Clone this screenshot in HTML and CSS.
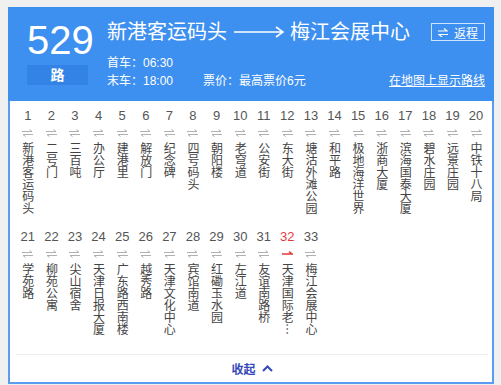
FILE: index.html
```html
<!DOCTYPE html>
<html>
<head>
    <title>529路</title>
    <link rel="stylesheet" href="styles.css">
</head>
<body>
    <div class="panel">
        <div class="head">
            <div class="line-badge">
                <div class="line-no">529</div>
                <div class="line-unit">路</div>
            </div>
            <div class="info">
                <div class="title-row">
                    <h1>新港客运码头<svg class="dir-arrow" width="52" height="14" viewBox="0 0 52 14"><path d="M1 7H50M43 2l7 5-7 5" fill="none" stroke="#fff" stroke-width="1.6"/></svg>梅江会展中心</h1>
                    <button class="return-btn"><svg width="10" height="9" viewBox="0 0 10 9"><path d="M0 3h9L6 0.5M10 6.5H1l3 2.5" fill="none" stroke="#fff" stroke-width="1.2"/></svg>返程</button>
                </div>
                <div class="meta">
                    <div class="times">
                        <div>首车：06:30</div>
                        <div>末车：18:00</div>
                    </div>
                    <div class="price">票价：最高票价6元</div>
                    <a class="map-link" href="#">在地图上显示路线</a>
                </div>
            </div>
        </div>

        <div class="body">
            <ol class="stops">
                <li><span class="no">1</span><i class="flow"></i><span class="name">新港客运码头</span></li>
                <li><span class="no">2</span><i class="flow"></i><span class="name">二号门</span></li>
                <li><span class="no">3</span><i class="flow"></i><span class="name">三百吨</span></li>
                <li><span class="no">4</span><i class="flow"></i><span class="name">办公厅</span></li>
                <li><span class="no">5</span><i class="flow"></i><span class="name">建港里</span></li>
                <li><span class="no">6</span><i class="flow"></i><span class="name">解放门</span></li>
                <li><span class="no">7</span><i class="flow"></i><span class="name">纪念碑</span></li>
                <li><span class="no">8</span><i class="flow"></i><span class="name">四号码头</span></li>
                <li><span class="no">9</span><i class="flow"></i><span class="name">朝阳楼</span></li>
                <li><span class="no">10</span><i class="flow"></i><span class="name">老穹道</span></li>
                <li><span class="no">11</span><i class="flow"></i><span class="name">公安街</span></li>
                <li><span class="no">12</span><i class="flow"></i><span class="name">东大街</span></li>
                <li><span class="no">13</span><i class="flow"></i><span class="name">塘沽外滩公园</span></li>
                <li><span class="no">14</span><i class="flow"></i><span class="name">和平路</span></li>
                <li><span class="no">15</span><i class="flow"></i><span class="name">极地海洋世界</span></li>
                <li><span class="no">16</span><i class="flow"></i><span class="name">浙商大厦</span></li>
                <li><span class="no">17</span><i class="flow"></i><span class="name">滨海国泰大厦</span></li>
                <li><span class="no">18</span><i class="flow"></i><span class="name">碧水庄园</span></li>
                <li><span class="no">19</span><i class="flow"></i><span class="name">远景庄园</span></li>
                <li><span class="no">20</span><i class="flow"></i><span class="name">中铁十八局</span></li>
                <li><span class="no">21</span><i class="flow"></i><span class="name">学苑路</span></li>
                <li><span class="no">22</span><i class="flow"></i><span class="name">柳苑公寓</span></li>
                <li><span class="no">23</span><i class="flow"></i><span class="name">尖山宿舍</span></li>
                <li><span class="no">24</span><i class="flow"></i><span class="name">天津日报大厦</span></li>
                <li><span class="no">25</span><i class="flow"></i><span class="name">广东路西南楼</span></li>
                <li><span class="no">26</span><i class="flow"></i><span class="name">越秀路</span></li>
                <li><span class="no">27</span><i class="flow"></i><span class="name">天津文化中心</span></li>
                <li><span class="no">28</span><i class="flow"></i><span class="name">宾馆南道</span></li>
                <li><span class="no">29</span><i class="flow"></i><span class="name">红磡玉水园</span></li>
                <li><span class="no">30</span><i class="flow"></i><span class="name">左江道</span></li>
                <li><span class="no">31</span><i class="flow"></i><span class="name">友谊南路桥</span></li>
                <li class="current"><span class="no">32</span><i class="flow"></i><span class="name">天津国际老…</span></li>
                <li><span class="no">33</span><i class="flow"></i><span class="name">梅江会展中心</span></li>
            </ol>

            <div class="fold">收起<svg width="11" height="7" viewBox="0 0 11 7"><path d="M1 6l4.5-4.5L10 6" fill="none" stroke="#3548b8" stroke-width="2"/></svg></div>
        </div>
    </div>
</body>
</html>
```

FILE: styles.css
```css
body {
    margin: 0;
    padding: 7px 0 0 8px;
    background: #f0f0f0;
    font-family: "Liberation Sans", "Noto Sans CJK SC", sans-serif;
}
.panel {
    width: 486px;
}
.head {
    display: flex;
    background: #3d8ff0;
    color: #fff;
    padding: 13px 9px 11px 19px;
}
.line-badge {
    width: 61px;
    margin-right: 19px;
}
.line-no {
    font-size: 40px;
    line-height: 40px;
    text-align: center;
}
.line-unit {
    margin-top: 5px;
    height: 20px;
    line-height: 20px;
    background: #3383e6;
    text-align: center;
    font-size: 14px;
    font-weight: bold;
}
.info {
    flex: 1;
}
.title-row {
    display: flex;
    justify-content: space-between;
    align-items: flex-start;
}
h1 {
    margin: 0;
    font-size: 20px;
    line-height: 24px;
    font-weight: normal;
    display: flex;
    align-items: center;
}
.dir-arrow {
    margin: 0 5px 0 6px;
}
.return-btn {
    margin-top: 3px;
    display: flex;
    align-items: center;
    gap: 6px;
    height: 18px;
    padding: 0 6px;
    background: transparent;
    border: 1px solid #cfe2fb;
    color: #fff;
    font-family: inherit;
    font-size: 12px;
    cursor: pointer;
}
.meta {
    display: flex;
    align-items: flex-end;
    margin-top: 10px;
    font-size: 12px;
    line-height: 18px;
}
.times {
    width: 96px;
}
.map-link {
    margin-left: auto;
    color: #fff;
}
.body {
    background: #fff;
    border: 2px solid #5b9cf0;
    border-top: none;
    padding: 7px 4px 0 6px;
}
.stops {
    list-style: none;
    margin: 0;
    padding: 0;
    display: grid;
    grid-template-columns: repeat(20, 23.6px);
    row-gap: 15px;
}
.stops li {
    display: flex;
    flex-direction: column;
    align-items: center;
}
.no {
    font-size: 13px;
    line-height: 16px;
    color: #555;
}
.flow {
    width: 11px;
    height: 8px;
    margin-top: 5px;
    background: url("data:image/svg+xml,%3Csvg xmlns='http://www.w3.org/2000/svg' width='11' height='8'%3E%3Cpath d='M0 2.5h10L7.5 0.5M11 5.5H1l2.5 2' fill='none' stroke='%23b0b0b0' stroke-width='1'/%3E%3C/svg%3E") no-repeat;
}
.name {
    margin-top: 5px;
    writing-mode: vertical-lr;
    font-family: "Noto Sans CJK SC", sans-serif;
    font-size: 12px;
    line-height: 14px;
    color: #444;
}
.current .no {
    color: #e4393c;
}
.current .flow {
    background: url("data:image/svg+xml,%3Csvg xmlns='http://www.w3.org/2000/svg' width='11' height='8'%3E%3Cpath d='M0 4h10L7 1.5' fill='none' stroke='%23e4393c' stroke-width='1.5'/%3E%3C/svg%3E") no-repeat;
}
.fold {
    margin-top: 19px;
    border-top: 1px solid #eeeeee;
    height: 27px;
    display: flex;
    align-items: center;
    justify-content: center;
    gap: 6px;
    font-family: "Noto Sans CJK SC", sans-serif;
    font-size: 12px;
    color: #3548b8;
    font-weight: bold;
}
```
